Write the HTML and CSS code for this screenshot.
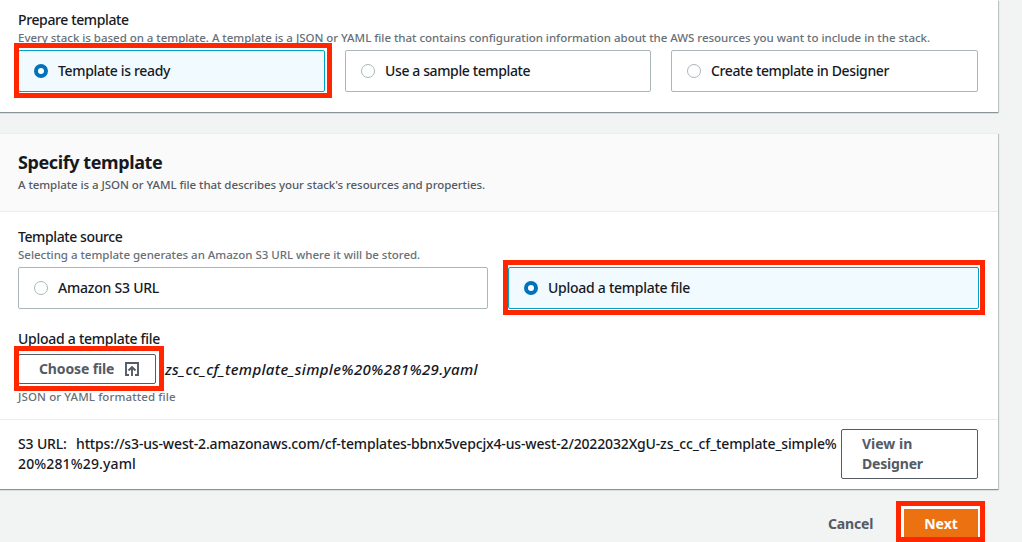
FILE: index.html
```html
<!DOCTYPE html>
<html lang="en">
<head>
<meta charset="utf-8">
<title>Create stack</title>
<link rel="stylesheet" href="styles.css">
</head>
<body>
<main class="page">
  <section class="panel panel-prepare">
    <h3 class="label"><span class="t-prepare">Prepare template</span></h3>
    <p class="hint"><span class="t-every">Every stack is based on a template. A template is a JSON or YAML file that contains configuration information about the AWS resources you want to include in the stack.</span></p>
    <div class="tiles tiles-three">
      <div class="tile selected"><i class="radio"></i><span class="t-ready">Template is ready</span><b class="mark mark-tile"></b></div>
      <div class="tile"><i class="radio"></i><span class="t-sample">Use a sample template</span></div>
      <div class="tile"><i class="radio"></i><span class="t-create">Create template in Designer</span></div>
    </div>
  </section>

  <section class="panel panel-specify">
    <header class="panel-head">
      <h2 class="title"><span class="t-title">Specify template</span></h2>
      <p class="description"><span class="t-desc">A template is a JSON or YAML file that describes your stack's resources and properties.</span></p>
    </header>
    <div class="panel-body">
      <h3 class="label"><span class="t-source">Template source</span></h3>
      <p class="hint"><span class="t-selecting">Selecting a template generates an Amazon S3 URL where it will be stored.</span></p>
      <div class="tiles tiles-two">
        <div class="tile"><i class="radio"></i><span class="t-s3">Amazon S3 URL</span></div>
        <div class="tile selected"><i class="radio"></i><span class="t-upload">Upload a template file</span><b class="mark mark-upload"></b></div>
      </div>
      <h3 class="label label-upload"><span class="t-upload">Upload a template file</span></h3>
      <div class="file-row">
        <button class="button choose"><span class="t-choose">Choose file</span>
          <svg class="icon" viewBox="0 0 16 16" width="16" height="16"><path d="M5 14H2V2h12v12h-3M8 15V6.5M4.5 9.5L8 6l3.5 3.5" fill="none" stroke="currentColor" stroke-width="1.9"/></svg>
          <b class="mark mark-choose"></b></button>
        <em class="filename"><span class="t-file">zs_cc_cf_template_simple%20%281%29.yaml</span></em>
      </div>
      <p class="hint hint-format"><span class="t-format">JSON or YAML formatted file</span></p>
    </div>
    <footer class="url-row">
      <div class="url"><div class="url-line"><span class="url-label">S3 URL:</span><span class="t-url">https://s3-us-west-2.amazonaws.com/cf-templates-bbnx5vepcjx4-us-west-2/2022032XgU-zs_cc_cf_template_simple%</span></div><div><span class="t-url2">20%281%29.yaml</span></div></div>
      <button class="button view"><span>View in</span><br><span class="t-designer">Designer</span></button>
    </footer>
  </section>

  <div class="actions">
    <button class="cancel"><span class="t-cancel">Cancel</span></button>
    <button class="next"><span>Next</span><b class="mark mark-next"></b></button>
  </div>
</main>
</body>
</html>
```
FILE: styles.css
```css
* { box-sizing: border-box; }
body { margin: 0; background: #f2f3f3; color: #16191f; font: 14px/20px "Noto Sans", "Open Sans", sans-serif; }
h2, h3, p { margin: 0; }
button { font: inherit; font-weight: 700; color: #545b64; }
span { white-space: nowrap; }
.page { width: 1022px; height: 542px; overflow: hidden; }
.panel { width: 998px; background: #fff; box-shadow: 0 1px 1px #879596, 1px 1px 1px #c4cccd; }
.panel-prepare { height: 112px; padding: 10px 20px 0 18px; }
.panel-specify { height: 356px; margin-top: 21px; border-top: 1px solid #eaeded; }
.label { height: 20px; font-size: 14px; font-weight: 500; line-height: 20px; }
.hint { height: 16px; color: #687078; font-size: 11.5px; font-weight: 500; line-height: 16px; }
.tiles { display: grid; margin-top: 4px; }
.tiles-three { grid-template-columns: 307px 306px 307px; gap: 20px; }
.tiles-two { grid-template-columns: 470px 471px; gap: 20px; }
.tile { position: relative; display: flex; align-items: center; height: 42px; padding-left: 15px; border: 1px solid #aab7b8; border-radius: 2px; font-weight: 500; }
.tile.selected { background: #f1faff; border-color: #00a1c9; }
.radio { flex: none; width: 14px; height: 14px; margin-right: 10px; border: 1px solid #aab7b8; border-radius: 50%; background: #fff; }
.selected .radio { border: 4.5px solid #0073bb; }
.mark { position: absolute; border: 5px solid #ff2600; pointer-events: none; }
.mark-tile { inset: -8.5px -8px -7px -5.5px; }
.mark-upload { inset: -8.5px -6.5px -6.5px -6px; }
.mark-choose { inset: -9px -9px -8px -5.5px; }
.mark-next { inset: -8px -6.5px 0.5px -8px; }
.selected { box-shadow: 0 0 0 3px #fff; }
.panel-head { height: 78px; padding: 17px 18px 0; background: #fafafa; border-bottom: 1px solid #eaeded; }
.title { height: 25px; font-size: 18px; line-height: 22px; font-weight: 700; }
.description { height: 18px; color: #545b64; font-size: 11.5px; font-weight: 500; line-height: 18px; }
.panel-body { height: 207px; padding: 15px 20px 0 18px; }
.label-upload { margin-top: 20px; }
.file-row { display: flex; align-items: center; height: 30px; margin-top: 5px; }
.button { border: 1px solid #545b64; border-radius: 2px; background: #fff; }
.choose { position: relative; display: flex; align-items: center; flex: none; width: 138px; height: 30px; padding: 0 0 0 20px; box-shadow: 0 0 0 4px #fff; }
.icon { margin-left: 10px; }
.filename { margin: -1px 0 0 9px; font-size: 15px; font-weight: 500; }
.hint-format { margin-top: 5px; }
.url-row { display: flex; justify-content: space-between; height: 70px; padding: 9px 20px 0 18px; border-top: 1px solid #eaeded; }
.url { width: 822px; padding-top: 5px; font-weight: 500; }
.url-line { display: flex; }
.url-label { flex: none; width: 58px; letter-spacing: -0.15px; }
.view { flex: none; width: 137px; height: 50px; padding: 0 0 0 20px; text-align: left; }
.actions { display: flex; justify-content: flex-end; align-items: flex-start; padding: 20px 44px 0 0; }
.cancel { width: 46px; height: 30px; margin-right: 30px; padding: 0; border: 0; background: none; text-align: left; }
.next { position: relative; width: 74px; height: 33px; padding: 0 0 3px; border: 0; background: #ec7211; color: #fff; box-shadow: 0 0 0 3px #fff; }

/* Per-label tracking */
.t-prepare { letter-spacing: -0.38px; }
.t-every { letter-spacing: -0.03px; }
.t-ready { letter-spacing: -0.33px; }
.t-sample, .t-create { letter-spacing: -0.38px; }
.t-title { letter-spacing: -0.41px; }
.t-desc { letter-spacing: -0.06px; }
.t-source { letter-spacing: -0.4px; }
.t-selecting { letter-spacing: -0.02px; }
.t-s3 { letter-spacing: -0.23px; }
.t-upload { letter-spacing: -0.27px; }
.t-choose { letter-spacing: -0.13px; }
.t-file { letter-spacing: 0.33px; }
.t-format { letter-spacing: 0.11px; }
.t-url { letter-spacing: -0.15px; }
.t-url2 { letter-spacing: 0.13px; }
.t-designer { letter-spacing: -0.18px; }
.t-cancel { letter-spacing: -0.15px; }
```
